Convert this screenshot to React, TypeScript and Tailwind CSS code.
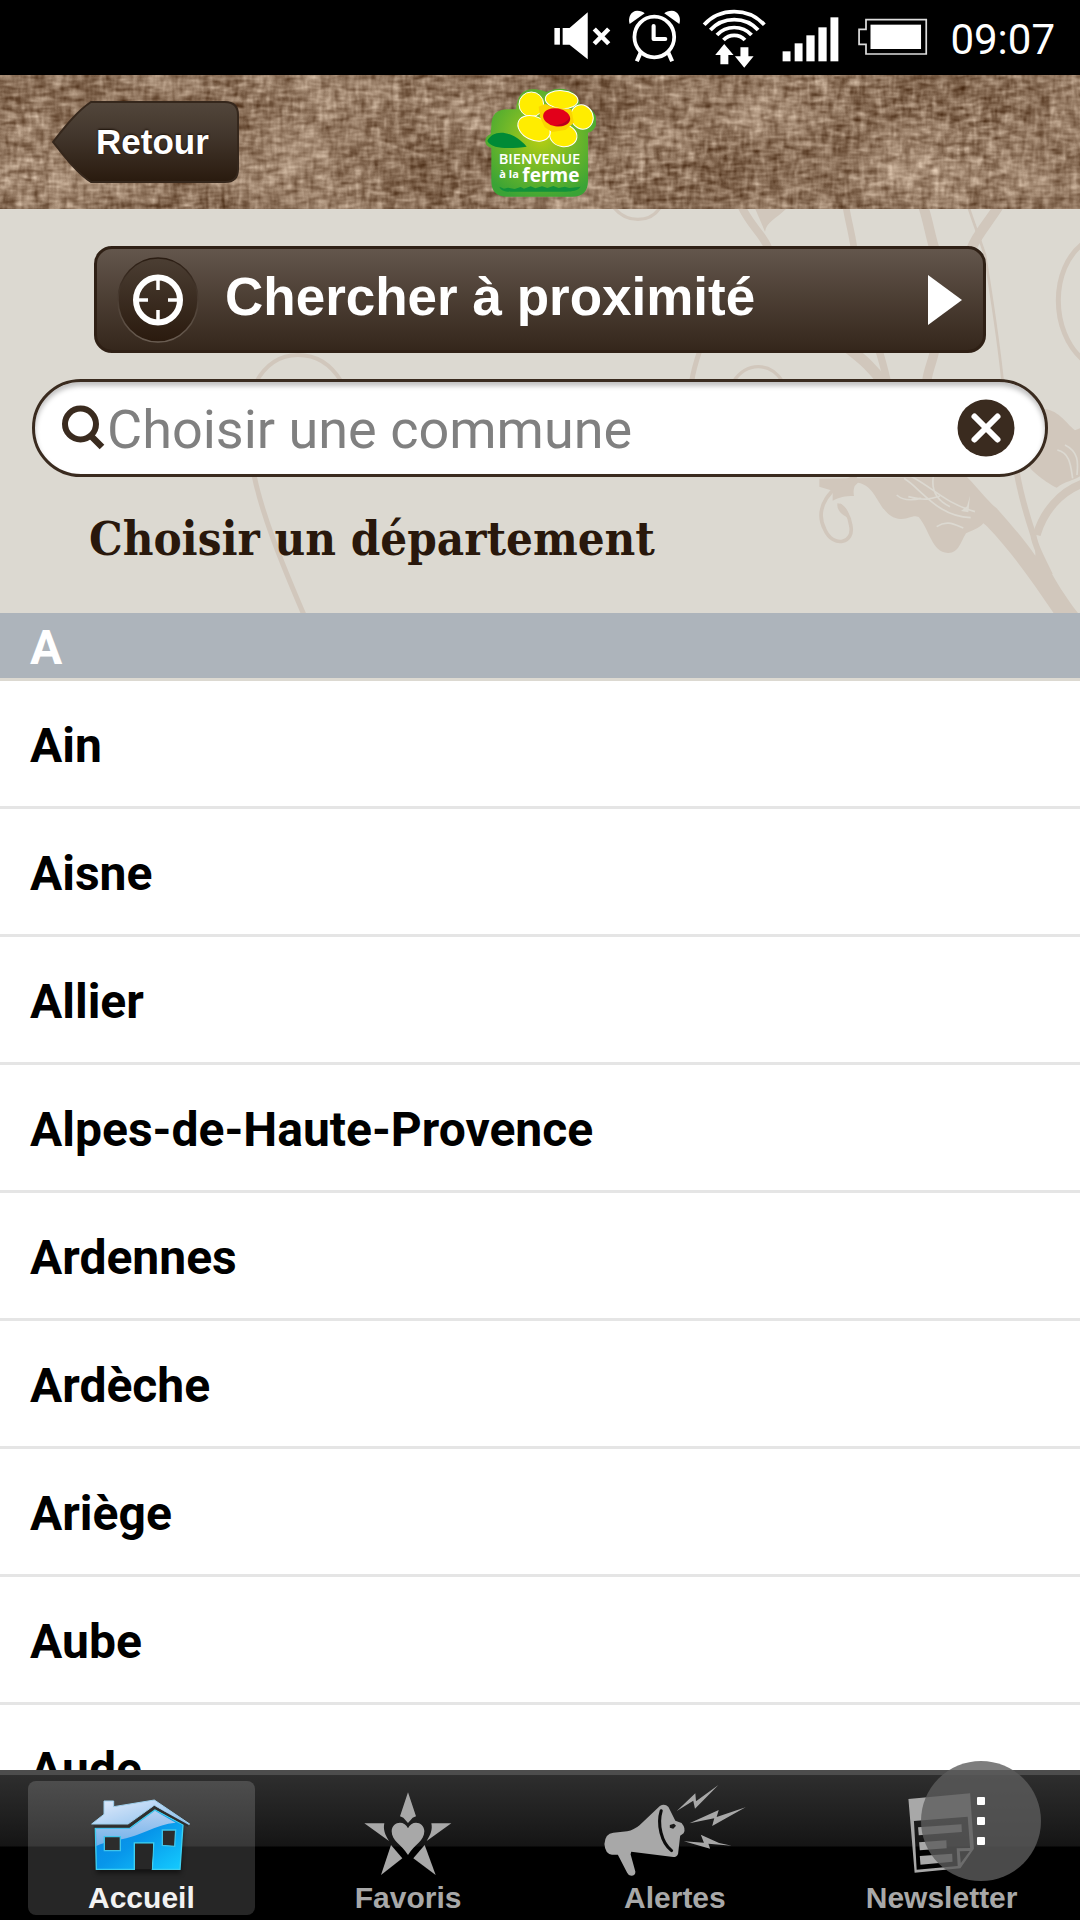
import React from "react";

const departments = [
  "Ain",
  "Aisne",
  "Allier",
  "Alpes-de-Haute-Provence",
  "Ardennes",
  "Ardèche",
  "Ariège",
  "Aube",
  "Aude",
];

function StatusBar() {
  return (
    <div className="flex h-[75px] shrink-0 items-center justify-end bg-black pr-[25px] text-white">
      <svg className="h-[76px] w-[67px]" viewBox="30 2 195 228" preserveAspectRatio="none" fill="#fff" aria-label="Muet">
        <rect x="37" y="86" width="16" height="50" />
        <path d="M61 86h20l53-47v141l-53-44H61z" />
        <path d="M153 89l42 44M195 89l-42 44" stroke="#fff" strokeWidth="13" />
      </svg>
      <svg className="h-[76px] w-[72px]" viewBox="225 2 210 228" preserveAspectRatio="none" fill="none" stroke="#fff" aria-label="Alarme">
        <path d="M256 74c-6-20 4-40 22-40 10 0 17 3 22 8z" fill="#fff" stroke="none" />
        <path d="M401 74c6-20-4-40-22-40-10 0-17 3-22 8z" fill="#fff" stroke="none" />
        <ellipse cx="328" cy="113" rx="58" ry="61" strokeWidth="11" />
        <path d="M288 160l-11 26M369 160l11 26" strokeWidth="12" />
        <path d="M326 80v39h34" strokeWidth="12" strokeLinecap="round" strokeLinejoin="round" />
      </svg>
      <svg className="h-[76px] w-[83px]" viewBox="435 2 240 228" preserveAspectRatio="none" fill="none" stroke="#fff" strokeWidth="11" aria-label="Wi-Fi">
        <path d="M473 76a116 116 0 0 1 174 0" />
        <path d="M491 92a92 92 0 0 1 138 0" />
        <path d="M510 107a67 67 0 0 1 100 0" />
        <path d="M529 122a42 42 0 0 1 62 0" />
        <path d="M531 134l27 33h-15v28h-23v-28h-15z" fill="#fff" stroke="none" />
        <path d="M589 205l-27-34h16v-27h23v27h15z" fill="#fff" stroke="none" />
      </svg>
      <svg className="h-[76px] w-[74px]" viewBox="675 2 215 228" preserveAspectRatio="none" fill="#fff" aria-label="Réseau">
        <rect x="700" y="156" width="23" height="30" />
        <rect x="735" y="132" width="23" height="54" />
        <rect x="769" y="108" width="24" height="78" />
        <rect x="804" y="84" width="24" height="102" />
        <rect x="839" y="54" width="23" height="132" />
      </svg>
      <svg className="h-[76px] w-[90px]" viewBox="890 2 260 228" preserveAspectRatio="none" aria-label="Batterie">
        <path d="M942 61h174v103H942v-29h-20V90h20z" fill="none" stroke="#ddd" strokeWidth="5" />
        <rect x="955" y="76" width="146" height="73" fill="#fff" />
      </svg>
      <span className="ml-3 pt-1 text-[42px] leading-[48px]">09:07</span>
    </div>
  );
}

function Burlap() {
  return (
    <svg className="absolute inset-0 h-full w-full" aria-hidden="true">
      <filter id="burlap" x="0" y="0" width="100%" height="100%" colorInterpolationFilters="sRGB">
        <feTurbulence type="fractalNoise" baseFrequency="0.06 0.18" numOctaves="2" seed="4" result="weft" />
        <feTurbulence type="fractalNoise" baseFrequency="0.18 0.06" numOctaves="2" seed="9" result="warp" />
        <feTurbulence type="fractalNoise" baseFrequency="0.008 0.016" numOctaves="2" seed="2" result="shade" />
        <feComposite in="weft" in2="warp" operator="arithmetic" k2="0.6" k3="0.4" result="cloth" />
        <feComposite in="cloth" in2="shade" operator="arithmetic" k2="0.75" k3="0.25" />
        <feColorMatrix
          type="matrix"
          values="1.05 0 0 0 0.04
                  1.1 0 0 0 -0.09
                  1.1 0 0 0 -0.18
                  0 0 0 0 1"
        />
      </filter>
      <rect width="100%" height="100%" filter="url(#burlap)" />
    </svg>
  );
}

function Logo() {
  return (
    <svg className="h-[110px] w-[112px]" viewBox="42 33 336 330" role="img" aria-label="Bienvenue à la ferme">
      <defs>
        <radialGradient id="leafGreen" cx="0.5" cy="0.45" r="0.6">
          <stop offset="0" stopColor="#b9cf10" />
          <stop offset="0.5" stopColor="#74b928" />
          <stop offset="1" stopColor="#3aa335" />
        </radialGradient>
      </defs>
      <path
        d="M64 150c0-34 16-50 50-50h24c4-40 20-60 50-60 20 0 34 6 42 8 40-20 92-10 100 38 60 6 62 76 24 84v144c0 32-16 48-48 48H112c-32 0-48-16-48-48v-98c-24-6-24-34-2-42z"
        fill="url(#leafGreen)"
      />
      <g fill="#ffed00" stroke="#fff" strokeWidth="3">
        <ellipse cx="184" cy="85" rx="37" ry="37" />
        <ellipse cx="275" cy="71" rx="49" ry="27" transform="rotate(4 275 71)" />
        <ellipse cx="336" cy="123" rx="33" ry="37" transform="rotate(-22 336 123)" />
        <ellipse cx="280" cy="179" rx="41" ry="33" transform="rotate(8 280 179)" />
        <ellipse cx="192" cy="157" rx="51" ry="35" transform="rotate(26 192 157)" />
      </g>
      <path d="M206 92l20-8 24 10 54 6 8 40-26 22-40 6-22-14-14-30z" fill="#fbd500" />
      <ellipse cx="260" cy="124" rx="41" ry="27" fill="#e2001a" transform="rotate(10 260 124)" />
      <path d="M300 124c0 20-18 30-46 24 24-2 36-10 46-24z" fill="#b4001c" />
      <path d="M52 195c16-36 74-34 118 17-30 3-100 14-118-17z" fill="#008a36" />
      <text x="86" y="264" fontFamily="Open Sans, sans-serif" fontWeight="600" fontSize="44" fill="#fff">BIENVENUE</text>
      <text x="88" y="307" fontFamily="Open Sans, sans-serif" fontWeight="700" fontSize="33" fill="#fff">à la</text>
      <text x="157" y="318" fontFamily="Open Sans, sans-serif" fontWeight="700" fontSize="57" fill="#fff">ferme</text>
      <path
        d="M88 332l14 6 12-3 20 4 18-6 10 5 20-7 14 6 20-6 16 5 18-6 16 6 18-4 14 4 34-4c-8 12-24 14-44 15H122c-20 0-30-4-34-15z"
        fill="#12913a"
      />
    </svg>
  );
}

function Header() {
  return (
    <header className="relative grid h-[134px] shrink-0 grid-cols-[1fr_auto_1fr] items-center overflow-hidden">
      <Burlap />
      <button type="button" className="relative -mt-px ml-[52px] h-[82px] w-[187px] pl-[44px] text-left">
        <svg className="absolute inset-0 h-full w-full" viewBox="0 0 187 82" aria-hidden="true">
          <defs>
            <linearGradient id="backFill" x1="0" y1="0" x2="0" y2="1">
              <stop offset="0" stopColor="#52463b" />
              <stop offset="0.4" stopColor="#43372d" />
              <stop offset="1" stopColor="#291a0e" />
            </linearGradient>
          </defs>
          <path
            d="M1 41C12 27 25 10 39 1h134q13 0 13 13v54q0 13-13 13H39C25 72 12 55 1 41z"
            fill="url(#backFill)"
            stroke="#35271c"
            strokeWidth="2"
          />
        </svg>
        <span className="relative font-['Liberation_Sans',Arial,sans-serif] text-[35px] leading-10 font-bold text-white [text-shadow:0_-1px_2px_#1b1008]">
          Retour
        </span>
      </button>
      <div className="relative">
        <Logo />
      </div>
    </header>
  );
}

function Flourish() {
  return (
    <svg
      className="absolute top-0 right-0 h-[404px] w-[1080px]"
      viewBox="0 0 1080 404"
      fill="none"
      stroke="#d1c7bc"
      aria-hidden="true"
    >
      <path d="M255 175C266 154 281 146 298 146s32 8 43 26" strokeWidth="4" />
      <path d="M254 266C262 305 280 350 304 406" strokeWidth="5" />
      <g transform="translate(600 -4) scale(0.33333)">
        <path d="M42 8C80 55 150 55 180 8" strokeWidth="10" />
        <path d="M425 5C450 60 490 90 505 130" strokeWidth="24" />
        <path d="M495 80C500 50 530 40 560 10H465z" fill="#d1c7bc" stroke="none" />
        <path d="M738 5C745 50 755 80 762 130" strokeWidth="20" />
        <path d="M970 5C985 50 990 90 1003 130" strokeWidth="30" />
        <path d="M1195 5C1160 60 1130 90 1115 130" strokeWidth="30" />
        <path d="M1105 5C1120 50 1135 90 1155 150 1175 280 1195 400 1208 530" strokeWidth="8" />
        <path d="M1450 115C1350 190 1350 380 1450 465" strokeWidth="15" />
        <path d="M275 530C280 495 288 470 300 435" strokeWidth="15" />
        <path d="M400 530C440 470 510 470 548 530" strokeWidth="10" />
        <path d="M745 430C790 465 820 490 850 535" strokeWidth="32" />
        <path d="M835 430C845 460 855 500 862 530" strokeWidth="22" />
        <path d="M1005 430C1000 465 985 490 980 530" strokeWidth="28" />
        <path
          d="M1325 612c50 0 70 40 100 64l25-10v140c-20 20-50 20-80 42-40-20-90-60-100-90z"
          fill="#d1c7bc"
          stroke="none"
        />
        <path d="M1372 735c40 10 40 50 46 85M1395 720c40 20 40 50 36 90" stroke="#dcd9d1" strokeWidth="5" />
        <path d="M1250 800C1262 870 1280 930 1300 990 1305 1020 1320 1050 1350 1110" strokeWidth="18" />
        <path d="M1310 990C1330 920 1380 860 1450 835" strokeWidth="24" />
        <path
          d="M1100 815c40 40 60 70 90 95 40 45 80 90 116 142l0-60c20 60 50 130 134 240h-74c-70-104-130-190-206-269l-10-8c-10 14-40 24-52 30-16 26-22 60-54 59-50-3-55-70-88-108-20-8-30 10-62 5-60-12-60-98-120-108l-10 10c-4 12-4 20-2 30-28 0-44 4-64 14v-30l-40-12v-24z"
          fill="#d1c7bc"
          stroke="none"
        />
        <path d="M1110 872l-5 50-22-4 18-14z" fill="#dcd9d1" stroke="none" />
        <path
          d="M912 820c50 30 100 115 200 118M935 815c60 30 100 80 190 105M925 875c40 10 60 10 95-2M890 870c20 18 50 16 74 10M1000 815c-8 50 20 76 50 90M1010 965c30-20 50-8 80 4"
          stroke="#dcd9d1"
          strokeWidth="5"
        />
        <path d="M770 815C690 840 640 910 675 975 700 1030 765 1015 752 960 748 930 735 915 718 900" strokeWidth="11" />
        <path d="M712 895c20 0 36 25 36 45-18-8-38-20-36-45z" fill="#d1c7bc" stroke="none" />
      </g>
    </svg>
  );
}

function SearchPanel() {
  return (
    <section className="relative shrink-0 overflow-hidden bg-[#dcd9d1] pt-[37px]">
      <Flourish />
      <div className="relative px-[94px]">
        <button
          type="button"
          className="flex h-[107px] w-full items-center rounded-[18px] border-[3px] border-[#2f2015] bg-linear-to-b from-[#63564c] to-[#35271c] pr-[21px] pl-5 text-left"
        >
          <svg className="h-[86px] w-[82px] shrink-0" viewBox="0 0 82 86" aria-hidden="true">
            <defs>
              <linearGradient id="aimFill" x1="0" y1="0" x2="0" y2="1">
                <stop offset="0" stopColor="#4b3e33" />
                <stop offset="1" stopColor="#2a1a0e" />
              </linearGradient>
              <linearGradient id="aimEdge" x1="0" y1="0" x2="0" y2="1">
                <stop offset="0" stopColor="#2a1c12" />
                <stop offset="1" stopColor="#6a5d52" />
              </linearGradient>
            </defs>
            <ellipse cx="41" cy="43" rx="40" ry="42" fill="url(#aimFill)" stroke="url(#aimEdge)" strokeWidth="1.5" />
            <g fill="none" stroke="#fff">
              <ellipse cx="41" cy="43" rx="22" ry="22.5" strokeWidth="6" />
              <path d="M41 20v13M41 53v13M18 43h13M51 43h13" strokeWidth="3.500" />
            </g>
          </svg>
          <span className="ml-[26px] grow pb-[5px] font-['Liberation_Sans',Arial,sans-serif] text-[53px] leading-[60px] font-bold whitespace-nowrap text-white">
            Chercher à proximité
          </span>
          <svg className="h-[50px] w-[34px] shrink-0" viewBox="0 0 34 50" fill="#fff" aria-hidden="true">
            <path d="M0 0l34 25L0 50z" />
          </svg>
        </button>
      </div>
      <form className="relative mx-8 mt-[26px] flex h-[98px] items-center rounded-full border-[3px] border-[#3a2b1f] bg-white pr-[30px] pl-[26px] shadow-[inset_0_4px_5px_rgba(0,0,0,0.25)]">
        <label htmlFor="commune" className="shrink-0">
          <span className="sr-only">Commune</span>
          <svg className="h-[46px] w-[44px]" viewBox="0 0 44 46" fill="none" stroke="#3a2b1f" aria-hidden="true">
            <circle cx="19.500" cy="19" r="15.500" strokeWidth="6" />
            <path d="M29 30l12 12" strokeWidth="6.500" />
          </svg>
        </label>
        <input
          id="commune"
          type="text"
          placeholder="Choisir une commune"
          className="ml-[2px] h-full min-w-0 grow bg-transparent pt-[3px] text-[54px] text-black outline-none placeholder:text-[#808080]"
        />
        <button type="reset" aria-label="Effacer" className="shrink-0">
          <svg className="size-[58px]" viewBox="0 0 58 58" aria-hidden="true">
            <circle cx="29" cy="29" r="28.500" fill="#3a2b1f" />
            <path d="M17.500 17.500l23 23M40.500 17.500l-23 23" stroke="#fff" strokeWidth="6" strokeLinecap="round" />
          </svg>
        </button>
      </form>
      <h1 className="relative pt-[30px] pb-[42px] pl-[89px] font-['DejaVu_Serif_Condensed','DejaVu_Serif',serif] text-[47px] leading-[64px] font-bold whitespace-nowrap text-[#29180c]">
        Choisir un département
      </h1>
    </section>
  );
}

function DepartmentList() {
  return (
    <section className="min-h-0 grow overflow-y-auto bg-white [scrollbar-width:none]">
      <h2 className="h-[68px] border-b-[3px] border-[#dcd9d1] bg-[#adb4bb] pt-[3px] pl-[30px] text-[48px] leading-[64px] font-bold text-white">
        A
      </h2>
      <ul>
        {departments.map((name) => (
          <li key={name} className="border-b-[3px] border-[#e5e5e5]">
            <a href="#" className="block pt-[5px] pl-[30px] text-[48px] leading-[120px] font-bold text-black">
              {name}
            </a>
          </li>
        ))}
      </ul>
    </section>
  );
}

function HouseIcon() {
  return (
    <svg className="h-[100px] w-[104px]" viewBox="30 3 312 300" aria-hidden="true">
      <defs>
        <linearGradient id="houseBlue" x1="0" y1="0" x2="1" y2="1">
          <stop offset="0" stopColor="#0a7fe0" />
          <stop offset="0.5" stopColor="#0796ea" />
          <stop offset="1" stopColor="#14ccff" />
        </linearGradient>
        <linearGradient id="houseGloss" x1="0" y1="0" x2="1" y2="0.8">
          <stop offset="0" stopColor="#e4ecfb" />
          <stop offset="1" stopColor="#8dc0ee" />
        </linearGradient>
        <linearGradient id="wallGloss" x1="0" y1="0" x2="0" y2="1">
          <stop offset="0" stopColor="#b4d0f2" />
          <stop offset="1" stopColor="#6eb0ea" />
        </linearGradient>
        <filter id="houseShadow">
          <feGaussianBlur stdDeviation="8" />
        </filter>
      </defs>
      <path d="M50 145h102l76-54 85 44-8 145H52z" fill="#000" opacity="0.5" filter="url(#houseShadow)" />
      <path
        d="M49 144h103l76-54 84 44-9 134h-83l4-79h-58v79H52z"
        fill="url(#houseBlue)"
        stroke="#3fd0f0"
        strokeWidth="4"
      />
      <path d="M51 146h102l75-54 62 36c-60 4-110 46-190 54-16 4-32 8-48 16z" fill="url(#wallGloss)" />
      <path
        d="M38 132l37-29V63h29v17l122-20 106 72-7 4-99-60-79 56H48z"
        fill="url(#houseGloss)"
        stroke="#9ed0ee"
        strokeWidth="3"
      />
      <path d="M44 140h106l76-58 102 56" fill="none" stroke="#2e2e2e" strokeWidth="7" />
      <path d="M76 170h48v42H76zM250 150h40l-3 49-37-3z" fill="#2c2c2c" stroke="#3fc4ea" strokeWidth="4" />
      <path d="M168 268v-77h54l-4 77z" fill="#272727" />
    </svg>
  );
}

function FavoriteIcon() {
  return (
    <svg className="h-[100px] w-[92px]" viewBox="850 3 276 300" fill="#a8a8a8" aria-hidden="true">
      <path d="M988 37l24 72-10 4-14 16-14-16-10-4z" />
      <path d="M857 130h60c-4 18 2 34 14 53z" />
      <path d="M1118 130h-60c4 18-2 34-14 53z" />
      <path d="M937 195l34 40-64 50z" />
      <path d="M1038 195l-34 40 67 50z" />
      <path d="M988 225c-20-32-49-42-49-71 0-30 39-35 49-9 10-26 49-21 49 9 0 29-29 39-49 71z" />
    </svg>
  );
}

function MegaphoneIcon() {
  return (
    <svg className="h-[100px] w-[146px]" viewBox="180 183 424 300" preserveAspectRatio="none" fill="#a8a8a8" aria-hidden="true">
      <path d="M348 258q14-9 25 3l20 41 18 7q14 17 6 31l-10 7-6 54q-3 10-14 10l-122-16-2 8 14 52q0 12-12 12-8 0-12-9l-27-54h-17q-20-2-22-32 2-32 26-34l40-4q20-4 36-18z" />
      <path d="M352 272c-12 40 0 96 30 120" fill="none" stroke="#0c0c0c" strokeWidth="9" strokeLinecap="round" />
      <path d="M377 315l12-4 6 6-8 9-10-3z" fill="#1a1a1a" />
      <path d="M397 273l54-53 2 24 65-49-68 71-5-24z" />
      <path d="M434 310l85-40-6 21 84-29-97 56 6-23z" />
      <path d="M418 364l58 4-9-24 53 25 37 8-68-6 5 15z" />
    </svg>
  );
}

function NewsletterIcon() {
  return (
    <svg className="h-[100px] w-[71px]" viewBox="1060 183 206 300" preserveAspectRatio="none" fill="#a8a8a8" aria-hidden="true">
      <path
        fillRule="evenodd"
        d="M1067 237l179-17 11 166-39 59-133 13zM1083 303l8 146 119-11-3-53 39-1-7-94zM1216 394l3 35 26-36z"
      />
      <path d="M1095 322l126-9 1 23-125 10zM1098 367l79-6 1 24-78 6zM1100 408l94-7 1 24-93 9z" />
    </svg>
  );
}

const tabs = [
  { label: "Accueil", Icon: HouseIcon, active: true },
  { label: "Favoris", Icon: FavoriteIcon, active: false },
  { label: "Alertes", Icon: MegaphoneIcon, active: false },
  { label: "Newsletter", Icon: NewsletterIcon, active: false },
];

function TabBar() {
  return (
    <nav className="relative h-[150px] shrink-0 border-t-[5px] border-[#4d4d4d] bg-[linear-gradient(#2e2e2e_0px,#151515_71px,#000_72px)] pt-[6px] pr-[5px] pl-2">
      <div className="grid grid-cols-4">
        {tabs.map(({ label, Icon, active }) => (
          <a
            key={label}
            href="#"
            aria-current={active ? "page" : undefined}
            className={
              active
                ? "mx-5 flex flex-col items-center rounded-lg bg-[linear-gradient(#4d4d4d_0px,#383838_65px,#262626_66px)] text-[#f2f2f2]"
                : "mx-5 flex flex-col items-center text-[#a8a8a8]"
            }
          >
            <Icon />
            <span className="font-['Liberation_Sans',Arial,sans-serif] text-[30px] leading-[34px] font-bold">{label}</span>
          </a>
        ))}
      </div>
      <button
        type="button"
        aria-label="Plus d'options"
        className="absolute -top-[14px] right-[39px] flex size-[120px] flex-col items-center justify-center gap-3 rounded-full bg-[#5c5c5c]/80"
      >
        <span className="size-2 rounded-[1px] bg-white" />
        <span className="size-2 rounded-[1px] bg-white" />
        <span className="size-2 rounded-[1px] bg-white" />
      </button>
    </nav>
  );
}

export default function App() {
  return (
    <div className="flex h-screen flex-col overflow-hidden bg-white font-[Roboto,sans-serif]">
      <StatusBar />
      <Header />
      <SearchPanel />
      <DepartmentList />
      <TabBar />
    </div>
  );
}
